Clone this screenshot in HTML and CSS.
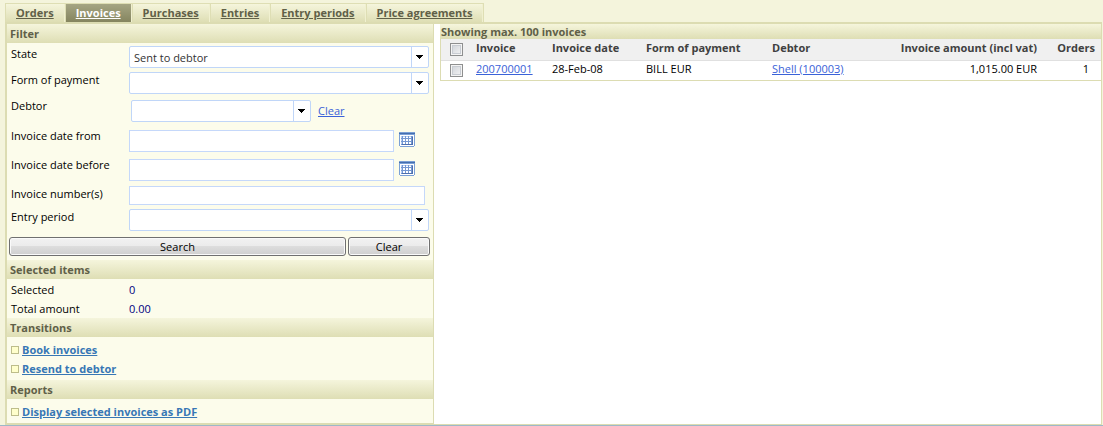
FILE: index.html
```html
<!DOCTYPE html>
<html lang="en">
<head>
<meta charset="utf-8">
<title>Invoices</title>
<link rel="stylesheet" href="styles.css">
</head>
<body>
<svg class="symbols" aria-hidden="true">
  <symbol id="arrow" viewBox="0 0 7 4"><path d="M0 0h7v1H6v1H5v1H4v1H3V3H2V2H1V1H0z"/></symbol>
  <symbol id="calendar" viewBox="0 0 16 15" shape-rendering="crispEdges">
    <path fill="#7ba0d6" d="M0 0h16v14h-1v1H1v-1H0z"/>
    <path fill="#456fae" d="M0 1h16v1H0z"/>
    <path fill="#fff" d="M1 3h14v11H1z"/>
    <path fill="#7598d2" d="M2 4h12v9H2z"/>
    <path fill="#4d6fae" d="M3 12h11v1H3zM13 5h1v8h-1z"/>
    <path fill="#b8d0f4" d="M2 4h1v2H2zM2 7h1v2H2zM2 10h1v2H2zM4 4h2v1H4zM7 4h2v1H7zM10 4h2v1h-2z"/>
    <path fill="#fff" d="M4 5h2v1H4zM7 5h2v1H7zM10 5h2v1h-2zM4 7h2v2H4zM7 7h2v2H7zM10 7h2v2h-2zM4 10h2v2H4zM7 10h2v2H7zM10 10h2v2h-2z"/>
  </symbol>
</svg>
<div class="page">
  <nav class="tabs">
    <a class="tab" href="#">Orders</a>
    <a class="tab active" href="#" aria-current="page">Invoices</a>
    <a class="tab" href="#">Purchases</a>
    <a class="tab" href="#">Entries</a>
    <a class="tab" href="#">Entry periods</a>
    <a class="tab" href="#">Price agreements</a>
  </nav>
  <div class="content">
    <aside class="sidebar">
      <h2 class="bar">Filter</h2>
      <form class="filter">
        <div class="row">
          <label for="state">State</label>
          <span class="combo"><select id="state"><option>Sent to debtor</option></select><svg class="arrow"><use href="#arrow"/></svg></span>
        </div>
        <div class="row">
          <label for="payment">Form of payment</label>
          <span class="combo"><select id="payment"><option></option></select><svg class="arrow"><use href="#arrow"/></svg></span>
        </div>
        <div class="row tall debtor">
          <label for="debtor">Debtor</label>
          <span class="combo"><select id="debtor"><option></option></select><svg class="arrow"><use href="#arrow"/></svg></span>
          <a class="link" href="#">Clear</a>
        </div>
        <div class="row tall">
          <label for="from">Invoice date from</label>
          <input class="text date" id="from" type="text">
          <button class="pick" type="button" aria-label="Pick date from"><svg class="calendar"><use href="#calendar"/></svg></button>
        </div>
        <div class="row tall">
          <label for="before">Invoice date before</label>
          <input class="text date" id="before" type="text">
          <button class="pick" type="button" aria-label="Pick date before"><svg class="calendar"><use href="#calendar"/></svg></button>
        </div>
        <div class="row">
          <label for="numbers">Invoice number(s)</label>
          <input class="text number" id="numbers" type="text">
        </div>
        <div class="row">
          <label for="period">Entry period</label>
          <span class="combo"><select id="period"><option></option></select><svg class="arrow"><use href="#arrow"/></svg></span>
        </div>
        <div class="buttons">
          <button class="button search" type="submit">Search</button>
          <button class="button clear" type="reset">Clear</button>
        </div>
      </form>
      <h2 class="bar">Selected items</h2>
      <dl class="totals">
        <dt>Selected</dt><dd>0</dd>
        <dt>Total amount</dt><dd>0.00</dd>
      </dl>
      <h2 class="bar">Transitions</h2>
      <ul class="actions">
        <li><a href="#">Book invoices</a></li>
        <li><a href="#">Resend to debtor</a></li>
      </ul>
      <h2 class="bar">Reports</h2>
      <ul class="actions">
        <li><a href="#">Display selected invoices as PDF</a></li>
      </ul>
    </aside>
    <main class="results">
      <table class="invoices">
        <caption>Showing max. 100 invoices</caption>
        <colgroup>
          <col class="c-check"><col class="c-invoice"><col class="c-date"><col class="c-payment"><col class="c-debtor"><col><col class="c-orders">
        </colgroup>
        <thead>
          <tr>
            <th><input class="check" type="checkbox" aria-label="Select all invoices"></th>
            <th>Invoice</th><th>Invoice date</th><th>Form of payment</th><th>Debtor</th>
            <th class="amount">Invoice amount (incl vat)</th><th class="orders">Orders</th>
          </tr>
        </thead>
        <tbody>
          <tr>
            <td><input class="check" type="checkbox" aria-label="Select invoice 200700001"></td>
            <td><a class="link" href="#">200700001</a></td><td>28-Feb-08</td><td>BILL EUR</td>
            <td><a class="link" href="#">Shell (100003)</a></td>
            <td class="amount">1,015.00 EUR</td><td class="orders">1</td>
          </tr>
        </tbody>
      </table>
    </main>
  </div>
</div>
</body>
</html>
```
FILE: styles.css
```css
*, *::before { box-sizing: border-box; }

body {
  margin: 0;
  background: #f4f4dc;
  color: #000;
  font: 11px/16px "Open Sans", "Noto Sans", sans-serif;
}

.symbols { display: none; }

.page {
  display: flex;
  flex-direction: column;
  min-height: 100vh;
  padding: 3px 1px 0 5px;
  border-bottom: 1px solid #9db8c8;
}

.tabs {
  display: flex;
  align-self: flex-start;
  border: solid #dedeb4;
  border-width: 1px 1px 0 0;
}

.tab {
  padding: 0 10px;
  border: solid #f0f0d0;
  border-width: 0 1px;
  border-left-color: #dedeb4;
  background: linear-gradient(#f5f5dc, #dedeb4);
  color: #606048;
  font-weight: bold;
  line-height: 18px;
}

.tab.active { background: linear-gradient(#a5a583, #85855f); color: #fff; }

.content {
  display: flex;
  flex: 1;
  border: solid #dcdcb2;
  border-width: 2px 1px 1px 2px;
  background: #fff;
}

.sidebar {
  flex: 0 0 427px;
  border: solid #dcdcb2;
  border-width: 0 1px 1px 0;
  background: #fcfceb;
}

.bar {
  margin: 0;
  padding: 0 3px;
  background: linear-gradient(#f5f5dc, #dedeb4);
  color: #606048;
  font-size: 11px;
  line-height: 19px;
}

.filter { padding: 1px 3px 4px 2px; }

.row {
  display: flex;
  padding: 2px 0 2px 2px;
}

.row.tall { padding-top: 4px; padding-bottom: 3px; }
.row label { width: 118px; height: 16px; }
.row.tall label { margin-top: -2px; }

.combo {
  position: relative;
  display: block;
  width: 300px;
  height: 22px;
}

.debtor .combo { width: 180px; margin: 0 7px 1px 2px; }
.debtor .link { margin-top: 3px; }

.combo select {
  width: 100%;
  height: 22px;
  padding: 2px 20px 0 4px;
  border: 1px solid #c0d6f8;
  border-radius: 2px;
  background: linear-gradient(#c0d6f8, #c0d6f8) right 16px top / 1px 100% no-repeat #fff;
  color: #333;
  font: inherit;
  appearance: none;
}

.arrow {
  position: absolute;
  top: 9px;
  right: 6px;
  width: 7px;
  height: 4px;
  pointer-events: none;
}

.text {
  height: 22px;
  padding: 0 4px;
  border: 1px solid #c5d8fa;
  background: #fff;
  font: inherit;
}

.text.date { width: 265px; }
.text.number { width: 296px; height: 19px; }

.pick {
  height: 19px;
  margin-left: 5px;
  padding: 2px 0;
  border: 0;
  background: none;
}

.calendar { display: block; width: 16px; height: 15px; }

.buttons {
  display: flex;
  gap: 2px;
  padding-top: 4px;
}

.button {
  height: 19px;
  padding: 0;
  border: 1px solid #707070;
  border-radius: 3px;
  background: linear-gradient(#f2f2f2, #ebebeb 50%, #dddddd 50%, #cfcfcf);
  box-shadow: inset 0 0 0 1px #fafafa;
  font: inherit;
  line-height: 16px;
}

.search { flex: 1; }
.clear { width: 82px; }

.totals {
  display: grid;
  grid-template-columns: 118px 1fr;
  margin: 0;
  padding: 1px 4px 0;
  line-height: 19px;
}

.totals dd { margin: 0; color: #000080; }

.actions {
  margin: 0;
  padding: 3px 4px 2px;
  list-style: none;
  font-weight: bold;
  line-height: 19px;
}

.actions li { display: flex; align-items: center; gap: 3px; }

.actions li::before {
  content: "";
  width: 8px;
  height: 8px;
  border: 1px solid #bdbd8b;
  background: #ffffcc;
}

.actions a { color: #3777b5; }
.link { color: #3a62d8; }

.results { flex: 1; padding-left: 6px; }

.invoices {
  width: 100%;
  border: solid #dcdcb2;
  border-width: 0 0 1px 1px;
  border-collapse: separate;
  border-spacing: 0;
  table-layout: fixed;
}

.invoices caption {
  padding-left: 1px;
  background: linear-gradient(#f5f5dc, #dedeb4);
  color: #606048;
  font-weight: bold;
  line-height: 15px;
  text-align: left;
}

.invoices th, .invoices td {
  height: 19px;
  padding: 0;
  text-align: left;
  vertical-align: top;
  white-space: nowrap;
}

.invoices th {
  height: 22px;
  padding-top: 1px;
  border-bottom: 1px solid #e0e0e0;
  background: #f0f0f0;
  color: #404040;
}

.c-check { width: 35px; }
.c-invoice { width: 76px; }
.c-date { width: 94px; }
.c-payment { width: 126px; }
.c-debtor { width: 110px; }
.c-orders { width: 64px; }

.invoices .amount { text-align: right; }
.invoices .orders { padding-right: 6px; text-align: right; }
.invoices td.orders { padding-right: 12px; }

.check {
  display: block;
  width: 13px;
  height: 13px;
  margin: 3px 0 0 9px;
  border: 1px solid #8e8f8f;
  background: linear-gradient(135deg, #ccd0d6, #f6f6f6);
  box-shadow: inset 0 0 0 1px #f4f4f4, inset 0 0 0 2px #c8ccd2;
  appearance: none;
}

.check:checked { background: #4a6ea8; }
```
